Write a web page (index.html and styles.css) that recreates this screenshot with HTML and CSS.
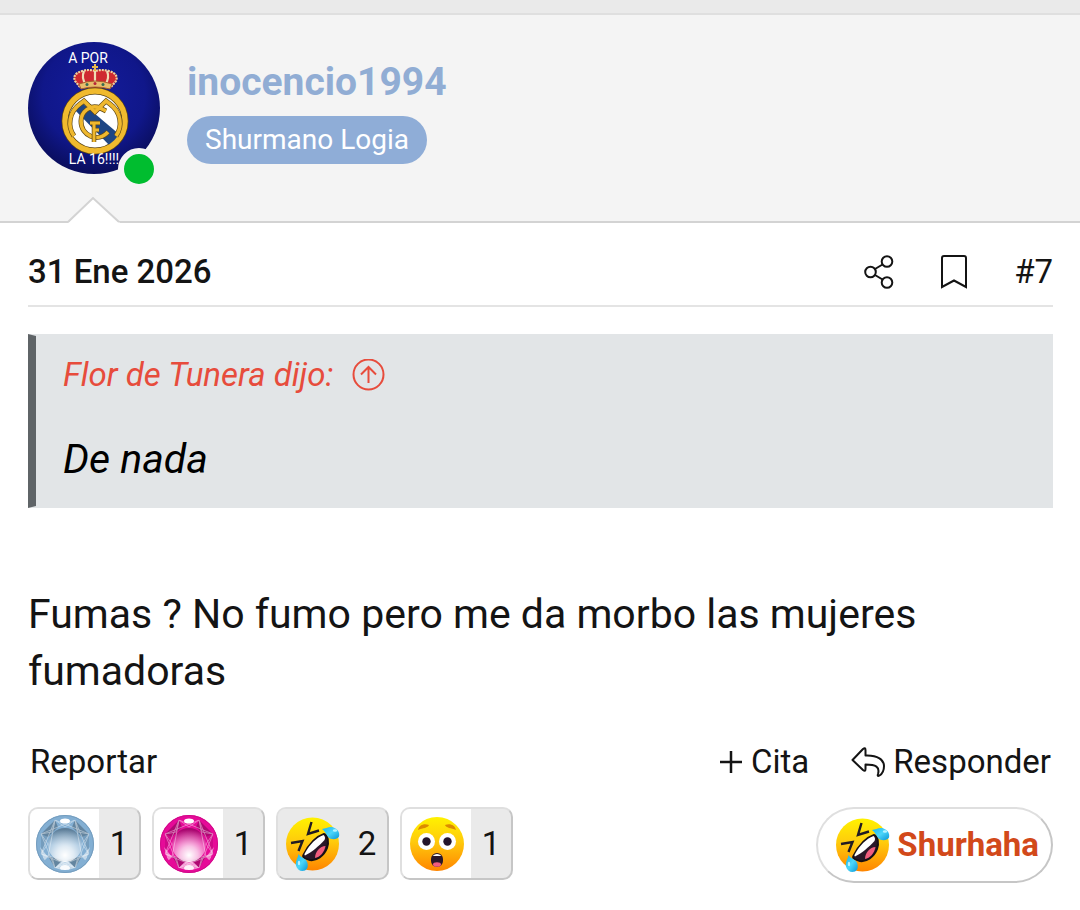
FILE: index.html
```html
<!DOCTYPE html>
<html lang="es">
<head>
    <meta charset="UTF-8">
    <meta name="viewport" content="width=device-width, initial-scale=1.0">
    <title>Mensaje #7</title>
    <link rel="stylesheet" href="styles.css">
</head>
<body>
    <!-- shared drawings -->
    <svg class="defs" width="0" height="0" aria-hidden="true">
        <defs>
            <linearGradient id="face" x1="0" y1="0" x2="0" y2="1">
                <stop offset="0" stop-color="#fff200"/>
                <stop offset=".45" stop-color="#ffcb0c"/>
                <stop offset="1" stop-color="#ff8500"/>
            </linearGradient>
            <linearGradient id="tear" x1="0" y1="0" x2="1" y2="1">
                <stop offset="0" stop-color="#14b4ee"/>
                <stop offset=".5" stop-color="#4cd6fa"/>
                <stop offset="1" stop-color="#0a96d6"/>
            </linearGradient>
            <radialGradient id="shine" cx=".5" cy=".8" r=".75">
                <stop offset="0" stop-color="#fff"/>
                <stop offset=".35" stop-color="#fff" stop-opacity=".75"/>
                <stop offset="1" stop-color="#fff" stop-opacity="0"/>
            </radialGradient>
            <linearGradient id="shade" x1="0" y1="0" x2="0" y2="1">
                <stop offset="0" stop-color="#000" stop-opacity=".3"/>
                <stop offset=".5" stop-color="#000" stop-opacity="0"/>
            </linearGradient>
            <radialGradient id="night" cx=".5" cy=".4" r=".65">
                <stop offset="0" stop-color="#141c9c"/>
                <stop offset=".6" stop-color="#10178a"/>
                <stop offset="1" stop-color="#080b50"/>
            </radialGradient>
            <symbol id="rofl" viewBox="0 0 54 54">
                <circle cx="26.500" cy="27" r="26.500" fill="url(#face)"/>
                <path d="M25.500 5L22 17L33 13.500M5 26L16.500 24L12.500 34" fill="none" stroke="#211b23" stroke-width="2.400"/>
                <path d="M38 17C42 18 43 25 41 31C38 39 30 44 24 43C20 42 16 41 17.500 38C22 29 29 20 38 17Z" fill="#2a1728" stroke="#171015" stroke-width="2"/>
                <path d="M37.500 18C39 19 39.500 21 38.500 23C33 29 26 35 19 38.500C18 38 18.500 37 19 36C24 27 30 21 37.500 18Z" fill="#fff"/>
                <path d="M39.500 29C34 29 29 35 29 41C34 40 38 36 39.500 29Z" fill="#f15c7e"/>
                <path d="M36 12C40 12 43 9 47.500 10.500C52 12 54 16 53 19.500C51 23 45 23 42 20C40 17 39 14 36 12Z" fill="url(#tear)"/>
                <path d="M12.500 37C12 41 9 44 10 48.500C11 53 15 55 19 53.500C22.500 52 22.500 46 20 43C17.500 40.500 14 40 12.500 37Z" fill="url(#tear)"/>
                <ellipse cx="49" cy="13.500" rx="2.200" ry="1.200" fill="#b8f3ff"/>
                <ellipse cx="13" cy="46" rx="1.200" ry="2.200" fill="#b8f3ff"/>
            </symbol>
            <symbol id="wow" viewBox="0 0 54 54">
                <circle cx="27" cy="27" r="27" fill="url(#face)"/>
                <path d="M8 13C9 8 14 6 19 8C18 11 13 11 8 13ZM46 13C45 8 40 6 35 8C36 11 41 11 46 13Z" fill="#dc8b00"/>
                <circle cx="16.500" cy="24.500" r="8.500" fill="#fff"/>
                <circle cx="37.500" cy="24.500" r="8.500" fill="#fff"/>
                <circle cx="16.500" cy="24.500" r="4.200" fill="#24152b"/>
                <circle cx="37.500" cy="24.500" r="4.200" fill="#24152b"/>
                <rect x="21" y="36" width="12" height="14" rx="6" fill="#2a1728"/>
                <path d="M22.500 39Q27 35 31.500 39Z" fill="#fff"/>
                <ellipse cx="27" cy="47.500" rx="4" ry="2.300" fill="#f15c7e"/>
            </symbol>
            <symbol id="gem" viewBox="0 0 58 58">
                <circle cx="29" cy="29" r="29" fill="currentColor"/>
                <path d="M19 5L5 19L12 22L22 12ZM39 5L53 19L46 22L36 12ZM12 41L19 53L27 45ZM46 41L39 53L31 45Z" fill="#000" opacity=".24"/>
                <path d="M5 19V39L12 22ZM53 19V39L46 22Z" fill="#000" opacity=".1"/>
                <circle cx="29" cy="30" r="17" fill="url(#shade)"/>
                <circle cx="29" cy="30" r="17" fill="url(#shine)"/>
                <path d="M4 32L12 42L8 46ZM54 32L46 42L50 46Z" fill="#fff" opacity=".5"/>
                <path d="M19 53Q29 39 39 53Q29 57 19 53Z" fill="#fff" opacity=".5"/>
                <ellipse cx="29" cy="53" rx="5" ry="3" fill="#fff" opacity=".9"/>
                <ellipse cx="29" cy="6" rx="5" ry="2.500" fill="#fff"/>
                <g fill="none" stroke="#fff" stroke-width=".8" opacity=".5">
                    <path d="M39 5L53 39L19 53L5 19ZM19 5L53 19L39 53L5 39Z"/>
                    <path d="M19 5L29 12L39 5L42 17L53 19L46 29L53 39L42 42L39 53L29 46L19 53L16 42L5 39L12 29L5 19L16 17Z"/>
                    <path d="M19 5L12 42M39 5L46 42"/>
                </g>
                <circle cx="29" cy="29" r="27.500" fill="none" stroke="currentColor" stroke-width="3"/>
                <circle cx="29" cy="29" r="28.500" fill="none" stroke="#000" stroke-width="1" opacity=".1"/>
            </symbol>
        </defs>
    </svg>

    <div class="strip"></div>
    <article class="message">
        <header class="user">
            <div class="avatar">
                <svg viewBox="0 0 132 132" role="img" aria-label="inocencio1994">
                    <circle cx="66" cy="66" r="66" fill="url(#night)"/>
                    <!-- crown -->
                    <path d="M52 46L46 38Q45 31 53 29Q60 27 67 28Q74 27 82 29Q90 31 89 38L83 46Z" fill="#cf2a30"/>
                    <path d="M52 45L47 39Q44 32 54 29Q61 27 67 29Q74 27 81 29Q91 32 88 39L83 45" fill="none" stroke="#ecd3a0" stroke-width="2.200" stroke-dasharray="2 1"/>
                    <path d="M56 29Q53 36 58 43M67 29V43M79 29Q82 36 77 43" fill="none" stroke="#f0dcb4" stroke-width="2.200"/>
                    <path d="M51 42Q67 36 84 42L82 47Q67 43 53 47Z" fill="#e9bd6b" stroke="#a8622f" stroke-width="1"/>
                    <path d="M67 22V29M64 25H70" stroke="#e9b84c" stroke-width="2"/>
                    <circle cx="59" cy="42.500" r="1.500" fill="#366d51"/>
                    <circle cx="67" cy="41.500" r="1.500" fill="#b72538"/>
                    <circle cx="75" cy="42.500" r="1.500" fill="#366d51"/>
                    <!-- crest -->
                    <circle cx="67" cy="79" r="30" fill="#fff" stroke="#5b4515" stroke-width="7"/>
                    <path d="M45 66L53 60L92 93L82 104Z" fill="#1e4684"/>
                    <circle cx="67" cy="79" r="30" fill="none" stroke="#f0ba2e" stroke-width="5.500"/>
                    <g fill="none">
                        <path d="M46 94C39 84 41 70 52 62L56 59L67 70L78 59L82 62C93 70 95 84 88 94M78 69L72 66C62 62 53 70 53 79C53 94 70 101 80 90" stroke="#624b18" stroke-width="5"/>
                        <path d="M46 94C39 84 41 70 52 62L56 59L67 70L78 59L82 62C93 70 95 84 88 94M78 69L72 66C62 62 53 70 53 79C53 94 70 101 80 90" stroke="#efb82e" stroke-width="3.600"/>
                        <path d="M66 100V81M62 81H72M66 88H71" stroke="#624b18" stroke-width="4.500"/>
                        <path d="M66 100V81M62 81H72M66 88H71" stroke="#efb82e" stroke-width="3"/>
                    </g>
                    <text x="60" y="21" text-anchor="middle">A POR</text>
                    <text x="66" y="122" text-anchor="middle">LA 16!!!!</text>
                </svg>
                <span class="online"></span>
            </div>
            <div class="user-info">
                <a href="#" class="username">inocencio1994</a>
                <span class="banner">Shurmano Logia</span>
            </div>
            <svg class="arrow" viewBox="0 0 54 28" aria-hidden="true">
                <path d="M1 27L26 2L53 27V28H0Z" fill="#fff"/>
                <path d="M1 26L26 2L52 26" fill="none" stroke="#d3d3d3" stroke-width="2"/>
            </svg>
        </header>

        <div class="content">
            <div class="attribution">
                <a href="#" class="date"><time datetime="2026-01-31">31 Ene 2026</time></a>
                <div class="tools">
                    <a href="#" aria-label="Compartir">
                        <svg width="30" height="34" viewBox="0 0 30 34" fill="none" stroke="currentColor" stroke-width="2">
                            <circle cx="6.500" cy="17" r="5.300"/>
                            <circle cx="23" cy="6.500" r="5.300"/>
                            <circle cx="23" cy="27.500" r="5.300"/>
                            <path d="M11 14L18.500 9.500M11 20L18.500 24.500"/>
                        </svg>
                    </a>
                    <a href="#" aria-label="Guardar">
                        <svg width="26" height="34" viewBox="0 0 26 34" fill="none" stroke="currentColor" stroke-width="2">
                            <path d="M1 32V3Q1 1 3 1H23Q25 1 25 3V32L13 25.500Z"/>
                        </svg>
                    </a>
                    <a href="#" class="number">#7</a>
                </div>
            </div>

            <blockquote>
                <a href="#" class="quote-title">Flor de Tunera dijo:
                    <svg width="33" height="33" viewBox="0 0 33 33" fill="none" stroke="currentColor" stroke-width="2">
                        <circle cx="16.500" cy="15.500" r="15"/>
                        <path d="M16.500 24V8M9 15.500L16.500 8L24 15.500"/>
                    </svg>
                </a>
                <p>De nada</p>
            </blockquote>

            <p class="text">Fumas ? No fumo pero me da morbo las mujeres fumadoras</p>

            <div class="actions">
                <a href="#">Reportar</a>
                <div class="actions-right">
                    <a href="#">
                        <svg width="24" height="24" viewBox="0 0 24 24" fill="none" stroke="currentColor" stroke-width="2.500"><path d="M12 1V23M1 12H23"/></svg>
                        Cita
                    </a>
                    <a href="#">
                        <svg width="34" height="32" viewBox="0 0 34 32" fill="none" stroke="currentColor" stroke-width="2" stroke-linejoin="round">
                            <path d="M1.500 14L12 3Q14.500 1 14.500 4V9.500C27 9 33 14 33 20C33 25 31 28 28.500 29.500Q26 31 27 28C29 21 25 18.500 14.500 18.500V23Q14.500 26 12 24Z"/>
                        </svg>
                        Responder
                    </a>
                </div>
            </div>

            <div class="footer">
                <div class="reactions">
                    <button type="button" class="reaction">
                        <span class="icon"><svg class="gem blue"><use href="#gem"/></svg></span>
                        <span class="count">1</span>
                    </button>
                    <button type="button" class="reaction">
                        <span class="icon"><svg class="gem pink"><use href="#gem"/></svg></span>
                        <span class="count">1</span>
                    </button>
                    <button type="button" class="reaction active">
                        <span class="icon"><svg class="emoji"><use href="#rofl"/></svg></span>
                        <span class="count">2</span>
                    </button>
                    <button type="button" class="reaction">
                        <span class="icon"><svg class="emoji"><use href="#wow"/></svg></span>
                        <span class="count">1</span>
                    </button>
                </div>
                <button type="button" class="react">
                    <svg class="emoji"><use href="#rofl"/></svg>
                    Shurhaha
                </button>
            </div>
        </div>
    </article>
</body>
</html>
```
FILE: styles.css
```css
* {
    box-sizing: border-box;
}

body {
    margin: 0;
    background-color: #fff;
    color: #141414;
    font-family: Roboto, "Liberation Sans", sans-serif;
    font-size: 33px;
    line-height: 40px;
}

a {
    color: inherit;
    text-decoration: none;
}

svg {
    display: block;
    flex-shrink: 0;
}

.defs {
    position: absolute;
}

.strip {
    height: 15px;
    background-color: #eaeaea;
    border-bottom: 2px solid #dfdfdf;
}

.user {
    position: relative;
    display: flex;
    gap: 27px;
    padding: 27px 28px 47px;
    background-color: #f4f4f4;
    border-bottom: 2px solid #d3d3d3;
}

.avatar {
    position: relative;
    width: 132px;
    height: 132px;
}

.avatar text {
    fill: #fff;
    font-size: 14px;
}

.online {
    position: absolute;
    right: 0;
    bottom: -16px;
    width: 42px;
    height: 42px;
    border: 6px solid #f4f4f4;
    border-radius: 50%;
    background-color: #00bd2f;
}

.user-info {
    display: flex;
    flex-direction: column;
    align-items: flex-start;
    gap: 10px;
    padding-top: 16px;
}

.username {
    color: #91add4;
    font-size: 39px;
    line-height: 48px;
    font-weight: bold;
}

.banner {
    padding: 0 18px;
    border-radius: 24px;
    background-color: #8fadd7;
    color: #fff;
    font-size: 28px;
    line-height: 48px;
}

.arrow {
    position: absolute;
    left: 67px;
    bottom: -3px;
    width: 54px;
    height: 28px;
}

.content {
    padding: 28px 27px 27px 28px;
}

.attribution {
    display: flex;
    align-items: center;
    justify-content: space-between;
    height: 56px;
    padding-bottom: 13px;
    border-bottom: 2px solid #e4e4e4;
}

.date {
    font-weight: 500;
}

.tools {
    display: flex;
    align-items: center;
    gap: 47px;
}

blockquote {
    margin: 27px 0 78px;
    padding: 19px 27px 18px;
    border: 2px solid #e2e5e7;
    border-left: 8px solid #5f6467;
    background-color: #e2e5e7;
    font-style: italic;
}

.quote-title {
    display: flex;
    align-items: center;
    gap: 19px;
    color: #e74c3c;
}

blockquote p {
    margin: 36px 0 0;
    color: #000;
    font-size: 41px;
    line-height: 57px;
}

.text {
    margin: 0;
    font-size: 41px;
    line-height: 57px;
}

.actions {
    display: flex;
    justify-content: space-between;
    margin-top: 42px;
    padding: 0 2px;
}

.actions-right {
    display: flex;
    gap: 42px;
}

.actions-right a {
    display: flex;
    align-items: center;
    gap: 8px;
}

.footer {
    display: flex;
    align-items: flex-start;
    justify-content: space-between;
    margin-top: 25px;
}

.reactions {
    display: flex;
    gap: 11px;
}

button {
    padding: 0;
    color: inherit;
    font: inherit;
    cursor: pointer;
    border: 2px solid;
    border-color: #dfdfdf #c6c6c6 #c6c6c6 #dfdfdf;
}

.reaction {
    display: flex;
    width: 113px;
    height: 73px;
    overflow: hidden;
    border-radius: 10px;
    background-color: #eaeaea;
}

.icon {
    display: flex;
    align-items: center;
    justify-content: center;
    width: 69px;
    height: 100%;
    background-color: #fff;
}

.active .icon {
    background-color: #eaeaea;
}

.count {
    flex: 1;
    align-self: center;
}

.gem {
    width: 58px;
    height: 58px;
}

.blue {
    color: #83afd3;
}

.pink {
    color: #e60b98;
}

.emoji {
    width: 54px;
    height: 54px;
}

.react {
    display: flex;
    align-items: center;
    gap: 7px;
    height: 76px;
    padding: 0 12px 0 18px;
    border-radius: 38px;
    background-color: #fff;
    color: #d2491a;
    font-weight: bold;
}
```
